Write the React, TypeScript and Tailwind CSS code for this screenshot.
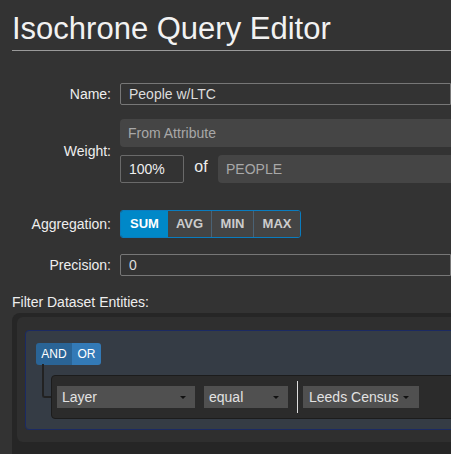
import React from "react";

const Caret = () => (
  <span className="inline-block w-0 h-0 border-l-[3px] border-r-[3px] border-t-[3px] border-l-transparent border-r-transparent border-t-[#111]" />
);

const Label = ({ children }: { children: React.ReactNode }) => (
  <div className="w-[112px] shrink-0 text-right pr-[1px] text-[14px] text-[#eeeeee]">{children}</div>
);

export default function App() {
  return (
    <div
      className="w-[451px] h-[454px] overflow-hidden bg-[#333333] text-[#eeeeee]"
      style={{ fontFamily: '"Liberation Sans", Arial, sans-serif' }}
    >
      <div className="ml-[12px] pt-[13px] pb-[6px] border-b border-[#9a9a9a]">
        <h1 className="text-[31px] leading-[31px] text-[#f2f2f2] whitespace-nowrap">Isochrone Query Editor</h1>
      </div>

      {/* Name */}
      <div className="flex items-center mt-[32px]">
        <Label>Name:</Label>
        <div className="ml-[8px] flex-1 h-[22px] border border-[#777777] rounded-l-[2px] bg-[#333333] flex items-center pl-[8px] text-[14px] text-[#dddddd] whitespace-nowrap">
          People w/LTC
        </div>
      </div>

      {/* Weight */}
      <div className="flex items-center mt-[14px]">
        <Label>Weight:</Label>
        <div className="ml-[8px] flex-1 flex flex-col gap-[8px]">
          <div className="h-[28px] bg-[#454545] rounded-l-[4px] flex items-center pl-[8px] text-[14px] text-[#a8a8a8] whitespace-nowrap">
            From Attribute
          </div>
          <div className="flex items-center h-[28px]">
            <div className="w-[64px] h-[28px] border border-[#6a6a6a] rounded-[2px] flex items-center pl-[8px] text-[14px] text-[#eeeeee]">
              100%
            </div>
            <div className="w-[34px] text-center text-[16px] text-[#eeeeee] -mt-[4px]">of</div>
            <div className="flex-1 h-[28px] bg-[#454545] rounded-l-[4px] flex items-center pl-[8px] text-[14px] text-[#a8a8a8]">
              PEOPLE
            </div>
          </div>
        </div>
      </div>

      {/* Aggregation */}
      <div className="flex items-center mt-[27px]">
        <Label>Aggregation:</Label>
        <div className="ml-[8px] flex h-[28px] border border-[#0a7cbf] rounded-[3px] overflow-hidden text-[13px] font-bold">
          <div className="w-[47px] bg-[#0088c8] text-white flex items-center justify-center">SUM</div>
          <div className="w-[44px] bg-[#444444] text-[#cccccc] flex items-center justify-center border-r border-[#4a6275]">AVG</div>
          <div className="w-[42px] bg-[#444444] text-[#cccccc] flex items-center justify-center border-r border-[#4a6275]">MIN</div>
          <div className="w-[46px] bg-[#444444] text-[#cccccc] flex items-center justify-center">MAX</div>
        </div>
      </div>

      {/* Precision */}
      <div className="flex items-center mt-[16px]">
        <Label>Precision:</Label>
        <div className="ml-[8px] flex-1 h-[22px] border border-[#777777] rounded-l-[2px] flex items-center pl-[8px] text-[14px] text-[#dddddd]">
          0
        </div>
      </div>

      <div className="ml-[12px] mt-[18px] text-[14px] leading-[16px] text-[#eeeeee] whitespace-nowrap">
        Filter Dataset Entities:
      </div>

      {/* Filter panel */}
      <div className="ml-[12px] mt-[3px] w-[460px] bg-[#262626] rounded-[8px] pt-[4px] pl-[5px] pb-[20px]">
        <div className="bg-[#2f2f2f] rounded-[6px] pt-[13px] pl-[8px] pb-[12px]">
          <div className="border border-[#1b2a63] bg-[#353c45] rounded-[4px] pt-[12px] pl-[10px] pb-[10px]">
            <div className="flex h-[22px] w-[65px] rounded-[3px] overflow-hidden text-[12px] text-white">
              <div className="w-[36px] bg-[#2a6496] flex items-center justify-center">AND</div>
              <div className="w-[29px] bg-[#337ab7] flex items-center justify-center">OR</div>
            </div>
            <div className="relative mt-[10px] ml-[15px]">
              <div className="absolute left-[-9px] top-[-11px] w-[9px] h-[34px] border-l-2 border-b-2 border-[#222222] rounded-bl-[3px]" />
              <div className="h-[44px] bg-[#2b2b2b] border border-[#1c1c1c] rounded-[4px] flex items-center pl-[5px] text-[14px] text-[#e2e2e2]">
                <div className="w-[138px] h-[22px] bg-[#505050] flex items-center justify-between pl-[5px] pr-[9px]">
                  <span>Layer</span>
                  <Caret />
                </div>
                <div className="ml-[9px] w-[84px] h-[22px] bg-[#505050] flex items-center justify-between pl-[5px] pr-[9px]">
                  <span>equal</span>
                  <Caret />
                </div>
                <div className="ml-[9px] w-[1px] h-[32px] bg-[#dddddd]" />
                <div className="ml-[5px] w-[116px] h-[22px] bg-[#505050] flex items-center pl-[6px] gap-[4px] whitespace-nowrap">
                  <span>Leeds Census</span>
                  <Caret />
                </div>
              </div>
            </div>
          </div>
        </div>
      </div>
    </div>
  );
}
